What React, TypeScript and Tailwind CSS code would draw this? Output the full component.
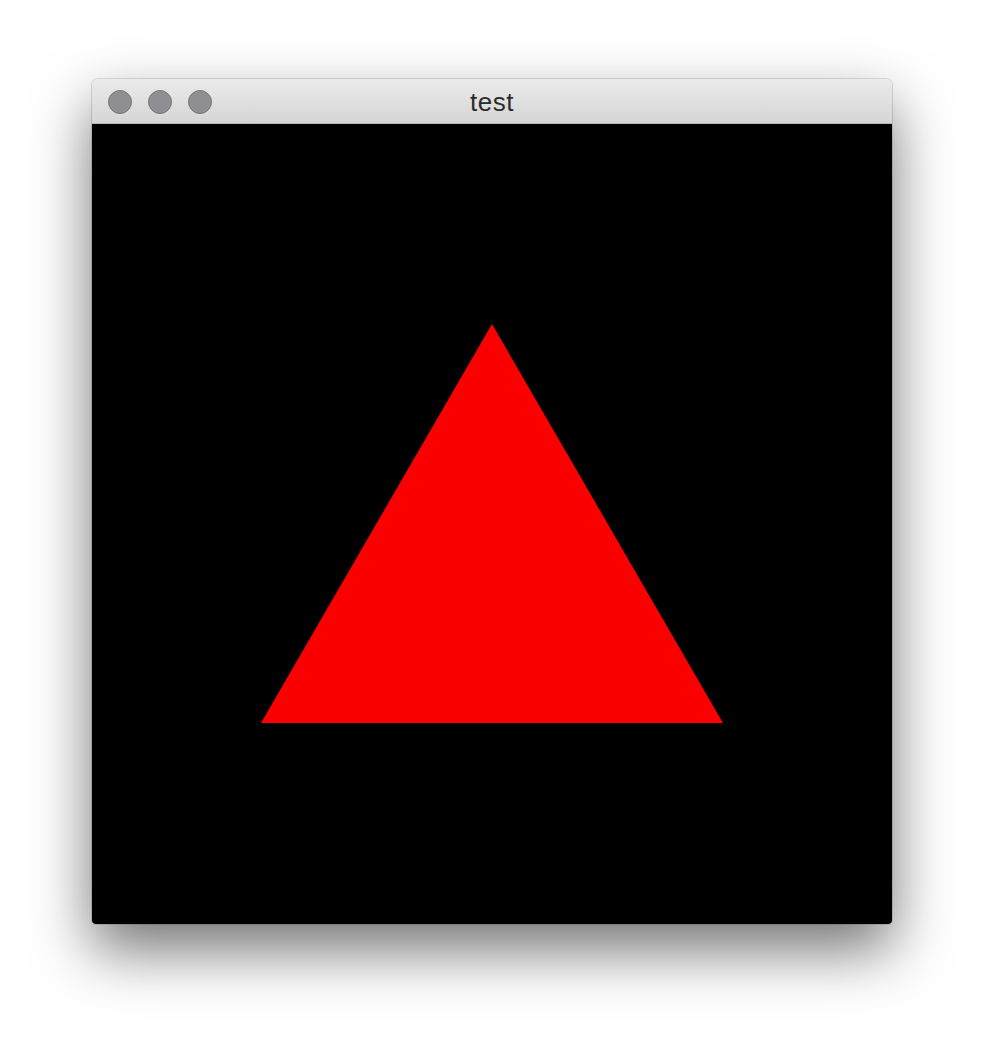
import React from "react";

export default function App() {
  return (
    <div className="w-[982px] h-[1046px] bg-white pt-[79px] pl-[92px]">
      <div className="w-[800px] rounded-t-[6px] rounded-b-[4px] shadow-[0_26px_60px_rgba(0,0,0,0.55),0_0_0_1px_rgba(0,0,0,0.12)] overflow-hidden">
        <div className="relative h-[45px] bg-gradient-to-b from-[#ebebeb] to-[#d5d5d5] border-b border-[#b9b9b9] flex items-center">
          <div className="flex gap-[16px] pl-[16px] pt-[1px]">
            <div className="w-[24px] h-[24px] rounded-full bg-[#8f8e93] border border-[#76757a]" />
            <div className="w-[24px] h-[24px] rounded-full bg-[#8f8e93] border border-[#76757a]" />
            <div className="w-[24px] h-[24px] rounded-full bg-[#8f8e93] border border-[#76757a]" />
          </div>
          <div className="absolute inset-0 flex items-center justify-center text-[26px] tracking-[0.5px] text-[#2b2b2b] font-['Liberation_Sans',sans-serif] pt-[2px]">
            test
          </div>
        </div>
        <div className="h-[800px] bg-black">
          <svg width="800" height="800" viewBox="0 0 800 800" className="block">
            <polygon points="400,200 631,599 169,599" fill="#fa0000" />
          </svg>
        </div>
      </div>
    </div>
  );
}
